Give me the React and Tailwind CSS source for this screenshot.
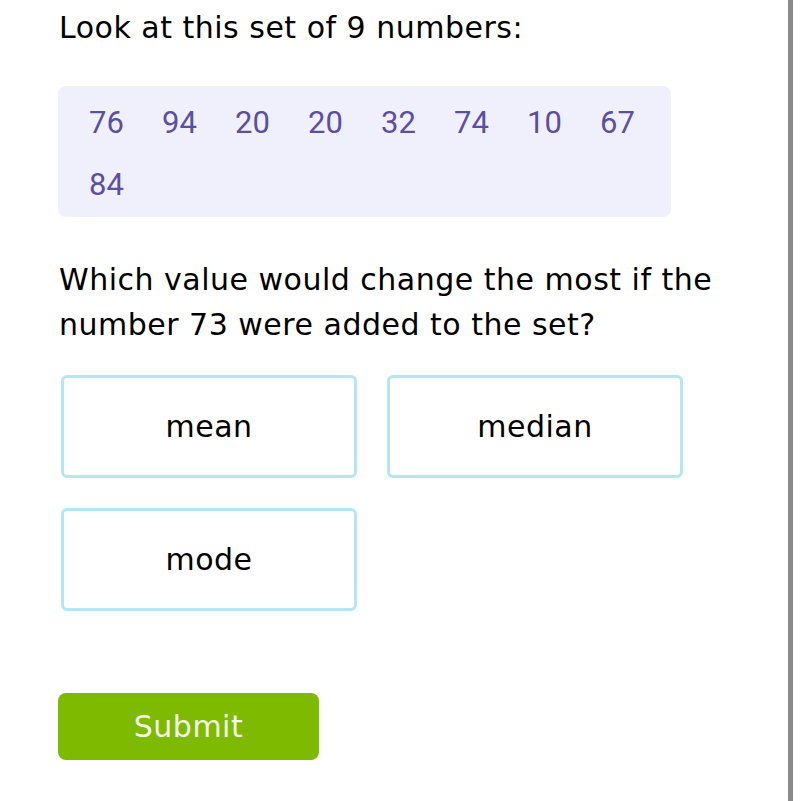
import React from 'react';

const numbers = [76, 94, 20, 20, 32, 74, 10, 67, 84];
const choices = ['mean', 'median', 'mode'];

export default function App() {
  return (
    <div className="w-[800px] h-[801px] bg-white flex overflow-hidden" style={{ fontFamily: '"DejaVu Sans", Verdana, sans-serif' }}>
      <div className="flex-1 pl-[59px] pt-[11px]">
        <h1 className="text-[30px] leading-[34px] tracking-[0.5px] text-black">Look at this set of 9 numbers:</h1>

        {/* number set */}
        <div className="mt-[41px] ml-[-1px] w-[613px] h-[131px] bg-[#f0effc] rounded-[8px] pl-[31px] pt-[19px]">
          <div className="grid grid-cols-[repeat(8,73px)] gap-y-[26px] text-[#5a4fa0] text-[31px] leading-[36px]" style={{ fontFamily: 'Roboto, sans-serif' }}>
            {numbers.map((n, i) => (
              <span key={i}>{n}</span>
            ))}
          </div>
        </div>

        <p className="mt-[40px] text-[30px] leading-[45px] tracking-[0.5px] text-black w-[680px]">
          Which value would change the most if the number 73 were added to the set?
        </p>

        {/* answer choices */}
        <div className="mt-[28px] ml-[2px] grid grid-cols-[296px_296px] gap-x-[30px] gap-y-[30px]">
          {choices.map((c) => (
            <button key={c} className="h-[103px] border-[3px] border-[#b5e6f7] rounded-[6px] bg-white flex items-center justify-center text-[30px] tracking-[0.5px] text-black">
              {c}
            </button>
          ))}
        </div>

        <button className="mt-[82px] ml-[-1px] w-[261px] h-[67px] rounded-[8px] bg-[#7dba00] text-[#f4fbe6] text-[30px] tracking-[0.5px] flex items-center justify-center">
          Submit
        </button>
      </div>

      {/* scrollbar edge */}
      <div className="w-[12px] flex">
        <div className="w-[5px] h-full bg-[#8a8a8a]" />
        <div className="flex-1 bg-white" />
      </div>
    </div>
  );
}
